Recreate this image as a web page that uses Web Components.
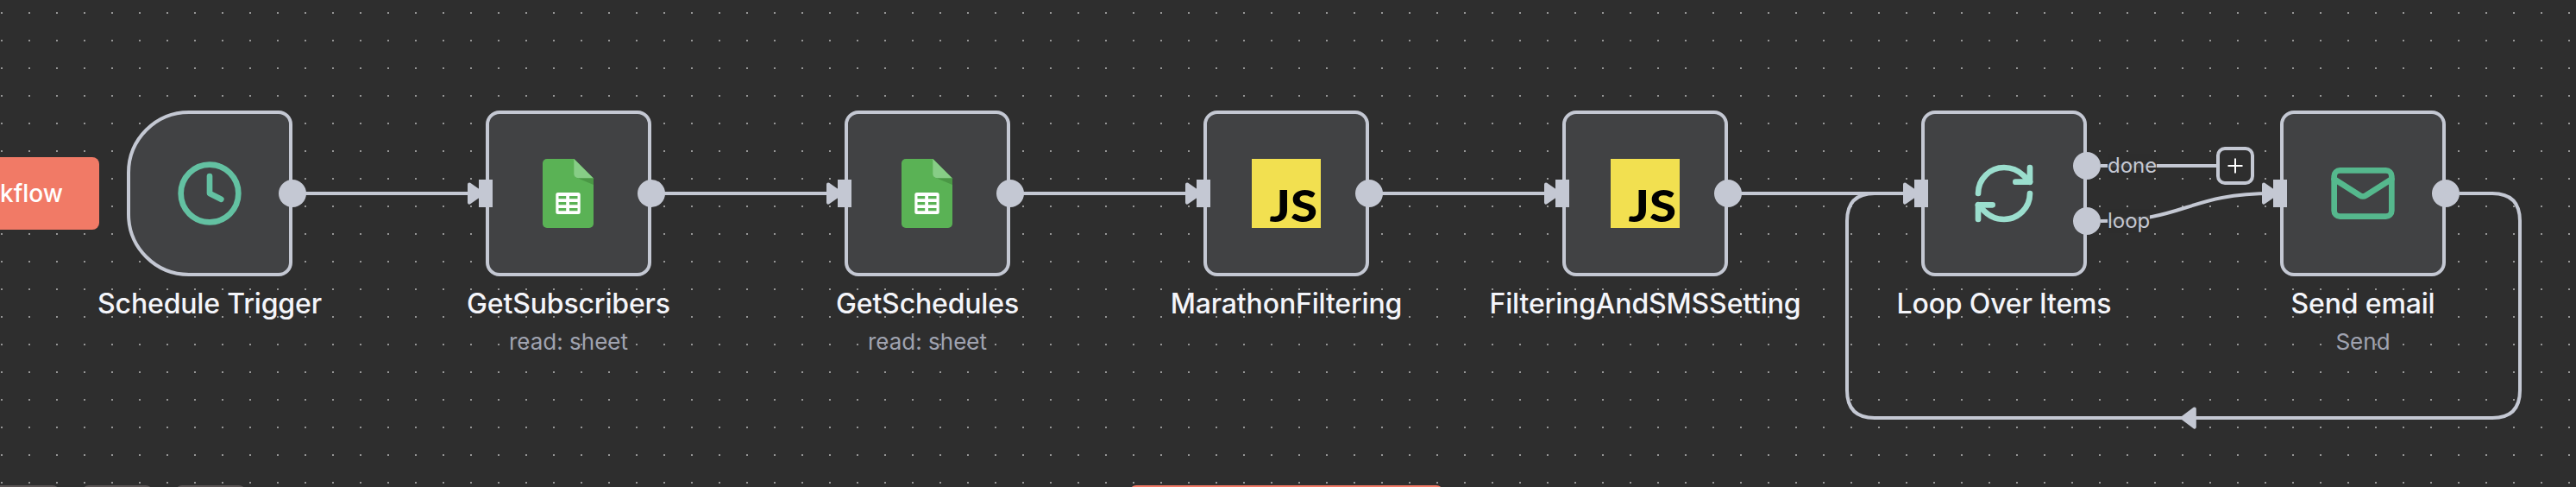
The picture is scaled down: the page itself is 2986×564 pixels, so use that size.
<!DOCTYPE html>
<html lang="en">
<head>
<meta charset="utf-8">
<title>Workflow</title>
<style>
  body {
    margin: 0;
    background: #2e2e2e;
    font-family: Inter, "Liberation Sans", sans-serif;
  }
</style>
</head>
<body>
<workflow-canvas>
  <workflow-edges slot="edges"></workflow-edges>
  <run-button slot="run">kflow</run-button>

  <workflow-node trigger name="Schedule Trigger"><node-icon type="clock"></node-icon></workflow-node>
  <workflow-node name="GetSubscribers" subtitle="read: sheet"><node-icon type="sheet"></node-icon></workflow-node>
  <workflow-node name="GetSchedules" subtitle="read: sheet"><node-icon type="sheet"></node-icon></workflow-node>
  <workflow-node name="MarathonFiltering"><node-icon type="js"></node-icon></workflow-node>
  <workflow-node name="FilteringAndSMSSetting"><node-icon type="js"></node-icon></workflow-node>
  <workflow-node outputs="done,loop" name="Loop Over Items"><node-icon type="refresh"></node-icon></workflow-node>
  <workflow-node name="Send email" subtitle="Send"><node-icon type="mail"></node-icon></workflow-node>

  <canvas-toolbar slot="toolbar"></canvas-toolbar>
</workflow-canvas>

<script>
const ICONS = {
  clock: `
    <svg viewBox="0 0 24 24" class="line" stroke="#63c1a2">
      <circle cx="12" cy="12" r="10"/>
      <polyline points="12 6 12 12 16 14"/>
    </svg>`,
  sheet: `
    <svg viewBox="0 0 80 80">
      <path fill="#5ab255" d="M15 0H46.500L69 22.500V75a5 5 0 0 1-5 5H15a5 5 0 0 1-5-5V5a5 5 0 0 1 5-5z"/>
      <path fill="#4a9745" d="M50 22L69 30V22z"/>
      <path fill="#87cd86" d="M46.300 0L68.600 22.300H51.300a5 5 0 0 1-5-5z"/>
      <rect x="25.300" y="39" width="28.400" height="25" rx="2.500" fill="#fff"/>
      <path fill="#5ab255" d="M28.500 43h8.700v3.200h-8.700zM41 43h9.500v3.200H41zM28.500 50h8.700v3.200h-8.700zM41 50h9.500v3.200H41zM28.500 57h8.700v3.200h-8.700zM41 57h9.500v3.200H41z"/>
    </svg>`,
  js: `
    <svg viewBox="0 0 80 80">
      <rect width="80" height="80" fill="#f2e050"/>
      <text x="20.500" y="73.300" font-family="Lato, sans-serif" font-weight="900" font-size="51" textLength="55.500" lengthAdjust="spacingAndGlyphs">JS</text>
    </svg>`,
  refresh: `
    <svg viewBox="0 0 24 24" class="line" stroke="#9bdece">
      <path d="M3 12a9 9 0 0 1 9-9 9.750 9.750 0 0 1 6.740 2.740L21 8"/>
      <path d="M21 3v5h-5"/>
      <path d="M21 12a9 9 0 0 1-9 9 9.750 9.750 0 0 1-6.740-2.740L3 16"/>
      <path d="M8 16H3v5"/>
    </svg>`,
  mail: `
    <svg viewBox="0 0 24 24" class="line" stroke="#55b88d">
      <rect x="2" y="4" width="20" height="16" rx="2"/>
      <path d="m22 7-8.970 5.700a1.940 1.940 0 0 1-2.060 0L2 7"/>
    </svg>`
};

class WorkflowCanvas extends HTMLElement {
  constructor() {
    super();
    this.attachShadow({ mode: 'open' });
  }

  connectedCallback() {
    this.shadowRoot.innerHTML = `
      <style>
        :host {
          --line: #c4c8d3;
          --surface: #2e2e2e;
          --accent: #f17a66;
          display: grid;
          grid-template-rows: 562px 2px;
          position: relative;
          width: 2986px;
          height: 564px;
          overflow: hidden;
          /* 2px dots on a 32px grid */
          background:
            repeating-linear-gradient(90deg, var(--surface) 0 1px, transparent 1px 3px, var(--surface) 3px 32px),
            repeating-linear-gradient(var(--surface) 0 14px, #959595 14px 16px, var(--surface) 16px 32px);
        }
        .nodes {
          display: flex;
          align-items: flex-start;
          gap: 224px;
          padding: 128px 0 0 147px;
        }
      </style>
      <slot name="edges"></slot>
      <slot name="run"></slot>
      <div class="nodes"><slot></slot></div>
      <slot name="toolbar"></slot>
    `;
  }
}

class WorkflowEdges extends HTMLElement {
  constructor() {
    super();
    this.attachShadow({ mode: 'open' });
  }

  connectedCallback() {
    // straight connections between neighbouring nodes
    const straight = [339, 755, 1171, 1587, 2003]
      .map(x => `<path d="M${x} 224H${x + 210}"/>`)
      .join('');
    const arrows = [555, 971, 1387, 1803, 2219, 2635]
      .map(x => `<path class="arrow" d="M${x - 11} 213.400L${x + 4} 224L${x - 11} 234.600z"/>`)
      .join('');

    this.shadowRoot.innerHTML = `
      <style>
        :host { position: absolute; inset: 0; }
        svg { display: block; }
        path { fill: none; stroke: var(--line); stroke-width: 4; }
        .arrow { fill: var(--line); stroke-linejoin: round; }
      </style>
      <svg width="2986" height="564">
        ${straight}
        <path d="M2435 192H2571"/>
        <path d="M2435 256C2535 256 2535 224 2635 224"/>
        <path d="M2851 224H2889Q2921 224 2921 256V452Q2921 484 2889 484H2173Q2141 484 2141 452V256Q2141 224 2173 224H2213"/>
        ${arrows}
        <path class="arrow" d="M2543.800 473.400L2529.500 484L2543.800 494.600z"/>
      </svg>
    `;
  }
}

class RunButton extends HTMLElement {
  constructor() {
    super();
    this.attachShadow({ mode: 'open' });
  }

  connectedCallback() {
    this.shadowRoot.innerHTML = `
      <style>
        :host { position: absolute; left: 0; top: 182px; }
        button {
          display: flex;
          align-items: center;
          justify-content: flex-end;
          width: 115px;
          height: 84px;
          padding: 0 42px 0 0;
          border: 0;
          border-radius: 0 8px 8px 0;
          background: var(--accent);
          color: #fff;
          font: 500 28px Inter, sans-serif;
        }
      </style>
      <button><slot></slot></button>
    `;
  }
}

class NodeIcon extends HTMLElement {
  constructor() {
    super();
    this.attachShadow({ mode: 'open' });
  }

  connectedCallback() {
    this.shadowRoot.innerHTML = `
      <style>
        :host { display: block; width: 80px; height: 80px; }
        svg { display: block; width: 80px; height: 80px; overflow: visible; }
        .line { fill: none; stroke-width: 2; stroke-linecap: round; stroke-linejoin: round; }
      </style>
      ${ICONS[this.getAttribute('type')]}
    `;
  }
}

class WorkflowNode extends HTMLElement {
  constructor() {
    super();
    this.attachShadow({ mode: 'open' });
  }

  connectedCallback() {
    const outputs = (this.getAttribute('outputs') || '').split(',');
    const subtitle = this.getAttribute('subtitle');
    const trigger = this.hasAttribute('trigger');

    this.shadowRoot.innerHTML = `
      <style>
        :host { display: block; position: relative; flex: none; width: 192px; }
        .box {
          box-sizing: border-box;
          display: flex;
          align-items: center;
          justify-content: center;
          width: 192px;
          height: 192px;
          border: 4px solid var(--line);
          border-radius: 16px;
          background: #414244;
        }
        :host([trigger]) .box { border-radius: 72px 16px 16px 72px; }
        .input {
          position: absolute;
          left: -8px;
          top: 80px;
          width: 16px;
          height: 32px;
          background: var(--line);
        }
        .outputs {
          position: absolute;
          left: 176px;
          top: 0;
          height: 192px;
          display: flex;
          flex-direction: column;
          justify-content: center;
          gap: 32px;
        }
        .output { display: flex; align-items: center; height: 32px; }
        .dot { width: 32px; height: 32px; border-radius: 50%; background: var(--line); }
        .output span {
          margin-left: 8px;
          background: rgba(46, 46, 46, 0.9);
          color: var(--line);
          font-size: 24px;
          line-height: 28px;
        }
        .plus {
          position: absolute;
          left: 342px;
          top: 42px;
          box-sizing: border-box;
          width: 44px;
          height: 44px;
          border: 4px solid var(--line);
          border-radius: 10px;
          background: var(--surface);
        }
        .plus svg { display: block; }
        .text {
          display: flex;
          flex-direction: column;
          align-items: center;
          margin: 11px -100px 0;
          white-space: nowrap;
        }
        .name { color: #f4f5fa; font-size: 32px; font-weight: 500; line-height: 42px; letter-spacing: -0.16px; }
        .subtitle { margin-top: 6px; color: #a0a3b0; font-size: 26px; line-height: 34px; }
      </style>
      <div class="box"><slot></slot></div>
      ${trigger ? '' : '<div class="input"></div>'}
      <div class="outputs">
        ${outputs.map(label => `<div class="output"><div class="dot"></div>${label ? `<span>${label}</span>` : ''}</div>`).join('')}
      </div>
      ${outputs.length > 1 ? `
        <div class="plus">
          <svg width="36" height="36" stroke="#fff" stroke-width="2"><path d="M9.500 18h17M18 9.500v17"/></svg>
        </div>` : ''}
      <div class="text">
        <div class="name">${this.getAttribute('name')}</div>
        ${subtitle ? `<div class="subtitle">${subtitle}</div>` : ''}
      </div>
    `;
  }
}

class CanvasToolbar extends HTMLElement {
  constructor() {
    super();
    this.attachShadow({ mode: 'open' });
  }

  connectedCallback() {
    // only the top edge of the buttons reaches into the canvas
    this.shadowRoot.innerHTML = `
      <style>
        :host { display: flex; gap: 26px; height: 80px; margin-left: -13px; }
        div { box-sizing: border-box; border: 2px solid #5b5555; border-radius: 8px; height: 80px; width: 82px; }
        .run { width: 364px; margin-left: 998px; border-color: var(--accent); background: var(--accent); }
      </style>
      <div></div><div></div><div></div><div class="run"></div>
    `;
  }
}

customElements.define('workflow-canvas', WorkflowCanvas);
customElements.define('workflow-edges', WorkflowEdges);
customElements.define('run-button', RunButton);
customElements.define('node-icon', NodeIcon);
customElements.define('workflow-node', WorkflowNode);
customElements.define('canvas-toolbar', CanvasToolbar);
</script>
</body>
</html>
